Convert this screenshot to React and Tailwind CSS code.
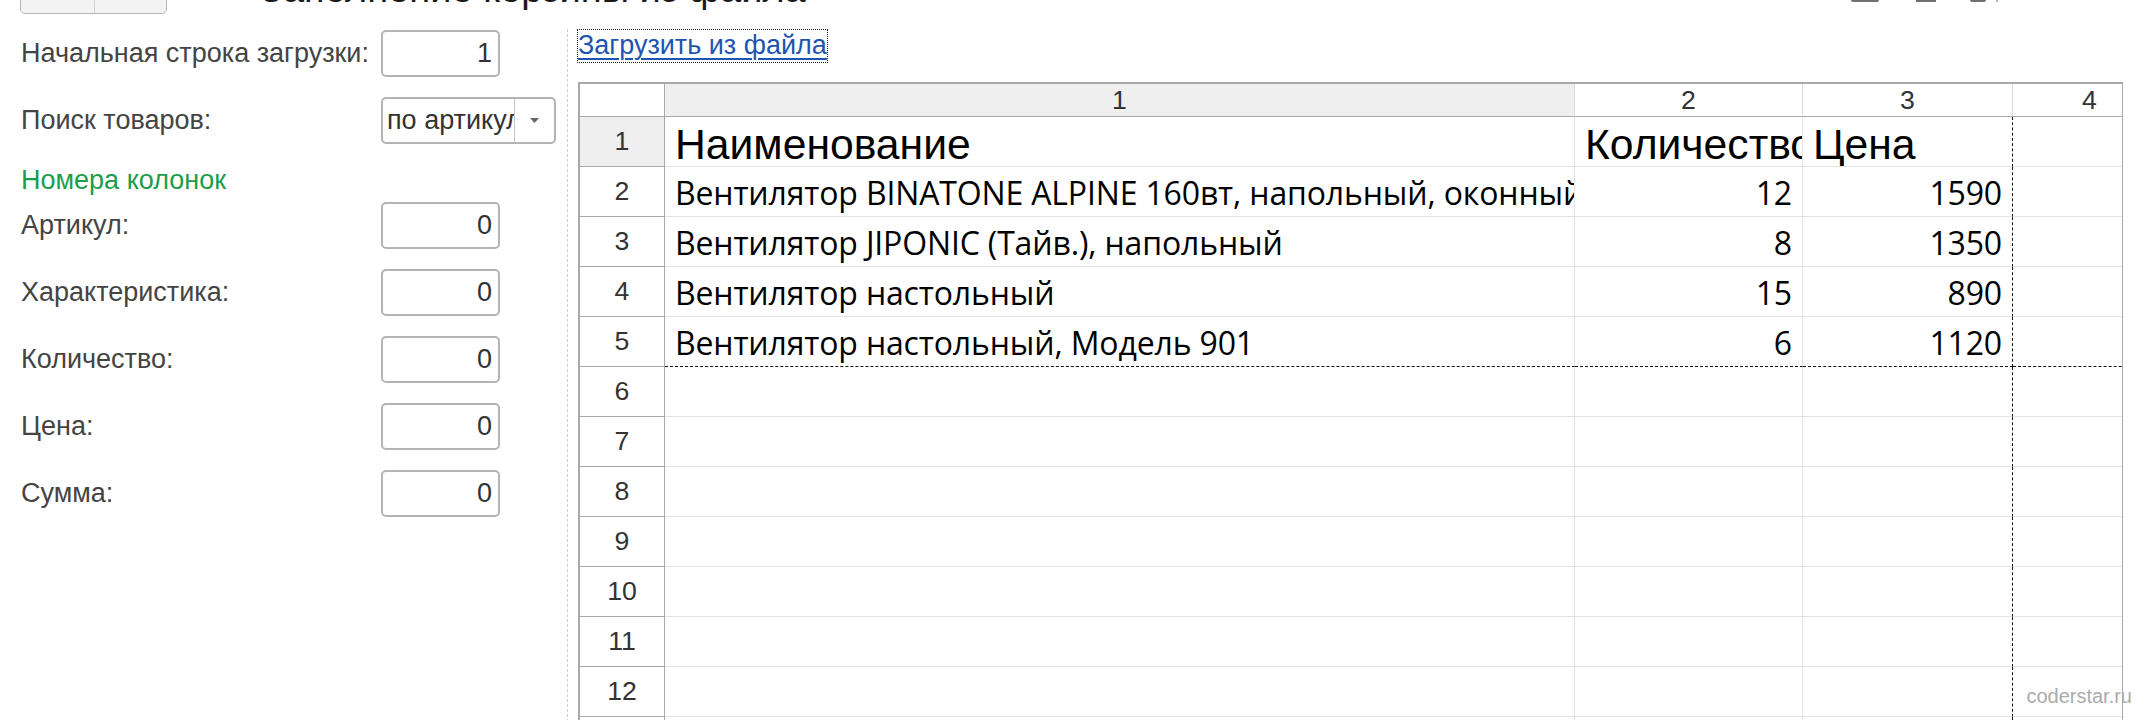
import React from 'react';

// Форма "Заполнение корзины из файла": настройки слева, табличный документ справа

const COL_W = ['w-[910px]', 'w-[228px]', 'w-[210px]', 'w-[154px]'];

const head = { name: 'Наименование', qty: 'Количество', price: 'Цена' };

const goods = [
  { name: 'Вентилятор BINATONE ALPINE 160вт, напольный, оконный', qty: '12', price: '1590' },
  { name: 'Вентилятор JIPONIC (Тайв.), напольный', qty: '8', price: '1350' },
  { name: 'Вентилятор настольный', qty: '15', price: '890' },
  { name: 'Вентилятор настольный, Модель 901', qty: '6', price: '1120' },
];

const columnFields = ['Артикул:', 'Характеристика:', 'Количество:', 'Цена:', 'Сумма:'];

const NumberBox = ({ value }) => (
  <div className="flex h-[47px] w-[119px] shrink-0 items-center justify-end rounded-[5px] border-2 border-[#b4b4b4] pr-[6px] text-[27px] leading-none text-[#333]">
    {value}
  </div>
);

const SheetRow = ({ num, cells, first, printEdge }) => (
  <div className="flex h-[50px]">
    <div
      className={`flex w-[85px] shrink-0 items-center justify-center border-r border-b border-[#a9a9a9] text-[26.67px] leading-none text-[#333] ${first ? 'bg-[#efefef]' : 'bg-white'}`}
    >
      {num}
    </div>
    {COL_W.map((w, i) => {
      const cell = cells ? cells[i] : null;
      return (
        <div
          key={i}
          className={`${w} flex shrink-0 items-end overflow-hidden whitespace-nowrap border-r border-b border-[#e3e3e3] ${
            i === 2 ? '[border-right-style:dashed] border-r-[#111]' : ''
          } ${printEdge ? '[border-bottom-style:dashed] border-b-[#111]' : ''} ${
            cell && cell.right ? 'justify-end pr-[10px]' : 'pl-[10px]'
          } ${
            first
              ? 'pb-0 text-[42.67px] leading-none text-black'
              : "pb-[7px] font-['Open_Sans',sans-serif] text-[32px] tracking-[-0.15px] leading-none text-black"
          }`}
        >
          {cell ? cell.text : null}
        </div>
      );
    })}
  </div>
);

export default function App() {
  const bodyRows = [];
  bodyRows.push(
    <SheetRow
      key={1}
      num="1"
      first
      cells={[{ text: head.name }, { text: head.qty }, { text: head.price }, null]}
    />
  );
  goods.forEach((g, idx) => {
    bodyRows.push(
      <SheetRow
        key={idx + 2}
        num={String(idx + 2)}
        printEdge={idx === goods.length - 1}
        cells={[{ text: g.name }, { text: g.qty, right: true }, { text: g.price, right: true }, null]}
      />
    );
  });
  for (let n = 6; n <= 13; n++) {
    bodyRows.push(<SheetRow key={n} num={String(n)} />);
  }

  return (
    <div className="relative h-[720px] w-[2150px] overflow-hidden bg-white font-['Liberation_Sans',Arial,sans-serif] text-[#444]">
      {/* заголовок формы, прокручен вверх */}
      <div className="flex h-[14px] items-end overflow-hidden">
        <div className="ml-[20px] flex h-[40px] w-[147px] shrink-0 rounded-b-[5px] border border-[#b5b5b5] bg-[#f3f3f3]">
          <div className="w-[74px] border-r border-[#d4d4d4]" />
        </div>
        <div className="ml-[93px] shrink-0 whitespace-nowrap pb-[6px] text-[38px] leading-none text-[#1a1a1a]">
          Заполнение корзины из файла
        </div>
        <div className="ml-auto mr-[152px] flex self-start">
          <div className="h-[2px] w-[28px] rounded-b-[2px] bg-[#707070]" />
          <div className="ml-[37px] h-[2px] w-[20px] bg-[#707070]" />
          <div className="ml-[34px] h-[2px] w-[16px] rounded-b-[2px] bg-[#707070]" />
          <div className="ml-[10px] h-[2px] w-[2px] bg-[#b0b0b0]" />
        </div>
      </div>

      <div className="flex">
        {/* параметры загрузки */}
        <div className="w-[567px] shrink-0 pl-[21px] text-[27px] leading-none">
          <div className="mt-[16px] flex h-[47px] items-center">
            <span className="w-[360px] shrink-0">Начальная строка загрузки:</span>
            <NumberBox value="1" />
          </div>
          <div className="mt-[20px] flex h-[47px] items-center">
            <span className="w-[360px] shrink-0">Поиск товаров:</span>
            <div className="flex h-[47px] w-[175px] shrink-0 rounded-[5px] border-2 border-[#b4b4b4]">
              <div className="flex flex-1 items-center overflow-hidden whitespace-nowrap pl-[4px] text-[#333]">
                по артикулу
              </div>
              <div className="flex w-[40px] shrink-0 items-center justify-center border-l border-[#c4c4c4]">
                <svg width="9" height="5" viewBox="0 0 9 5">
                  <path d="M0 0h9L4.5 5z" fill="#666" />
                </svg>
              </div>
            </div>
          </div>
          <div className="mt-[18px] flex h-[36px] items-center text-[#1a9e4c]">Номера колонок</div>
          {columnFields.map((label, i) => (
            <div key={label} className={`flex h-[47px] items-center ${i === 0 ? 'mt-[4px]' : 'mt-[20px]'}`}>
              <span className="w-[360px] shrink-0">{label}</span>
              <NumberBox value="0" />
            </div>
          ))}
        </div>

        {/* табличный документ */}
        <div className="mt-[15px] flex-1 border-l border-dashed border-[#cfcfcf] pl-[9px]">
          <div className="inline-flex h-[34px] items-start border border-dotted border-[#222] pt-[2px] text-[27px] leading-none text-[#1f55b0] underline decoration-[2px] underline-offset-[4px]">
            Загрузить из файла
          </div>
          <div className="ml-[1px] mt-[19px] w-[1545px] overflow-hidden border-t-2 border-l-2 border-r border-[#a9a9a9]">
            <div className="flex h-[33px]">
              <div className="w-[85px] shrink-0 border-r border-b border-[#a9a9a9]" />
              {['1', '2', '3', '4'].map((n, i) => (
                <div
                  key={n}
                  className={`${COL_W[i]} flex shrink-0 items-center justify-center border-r border-b border-r-[#dcdcdc] border-b-[#a9a9a9] text-[26.67px] leading-none text-[#333] ${
                    i === 0 ? 'bg-[#efefef]' : 'bg-white'
                  }`}
                >
                  {n}
                </div>
              ))}
            </div>
            {bodyRows}
          </div>
        </div>
      </div>

      <div className="absolute right-[18px] top-[686px] text-[20px] leading-none text-[#ababab]">coderstar.ru</div>
    </div>
  );
}
